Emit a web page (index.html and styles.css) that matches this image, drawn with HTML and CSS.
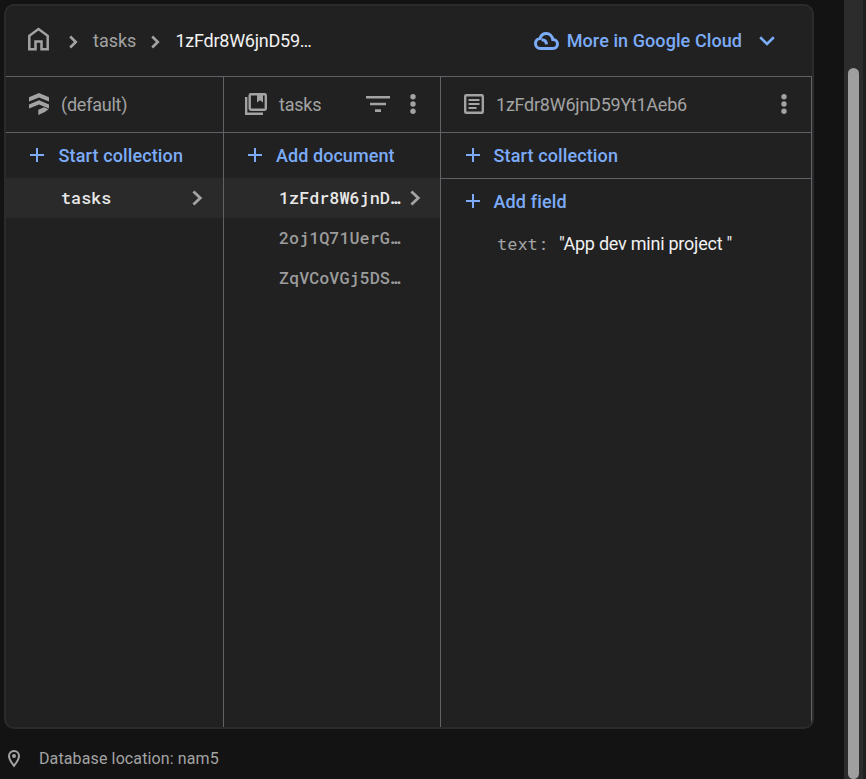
FILE: index.html
```
<!DOCTYPE html>
<html lang="en">
<head>
<meta charset="utf-8">
<title>Firestore data</title>
<link rel="stylesheet" href="styles.css">
</head>
<body>
<div class="page">
<main>
<section class="panel">
  <header class="topbar">
    <svg class="home" width="22" height="24" viewBox="0 0 22 24"><path d="M1.300 22.300V8.800L10.500 2l9.200 6.800v13.500h-6.200v-7.800h-6v7.800z" fill="none" stroke="currentColor" stroke-width="2.500"/></svg>
    <svg class="crumb-arrow first" width="9" height="14" viewBox="0 0 9 14"><path d="M1.200 1.500 6.800 7l-5.600 5.500"/></svg>
    <span class="crumb">tasks</span>
    <svg class="crumb-arrow" width="9" height="14" viewBox="0 0 9 14"><path d="M1.200 1.500 6.800 7l-5.600 5.500"/></svg>
    <span class="crumb current">1zFdr8W6jnD59…</span>
    <a class="cloud-link">
      <svg width="25" height="18" viewBox="0 0 25 18" fill="none" stroke="currentColor" stroke-width="3"><path d="M14 16.400H6.500C3.500 16.400 1.500 14.200 1.500 11.400c0-2.600 1.900-4.700 4.500-5C7 3.200 9.500 1.500 12.300 1.500c3.500 0 6 2.600 6.500 6 2.700.1 4.700 2 4.700 4.500s-1.800 4.400-4.500 4.400H14"/><path d="M7.500 7.800c3.300 0 4.900 1.800 5 4.600"/></svg>
      <span>More in Google Cloud</span>
      <svg class="down" width="16" height="10" viewBox="0 0 16 10"><path d="M1.200 1.300 8 8l6.800-6.700" fill="none" stroke="currentColor" stroke-width="2.600"/></svg>
    </a>
  </header>
  <div class="columns">
    <section class="column">
      <header class="col-head">
        <svg width="20" height="22" viewBox="0 0 20 22" fill="currentColor"><path d="M0 4.200 10 0l10 4.200V8.400L10 4.400 0 8.400z M0 11.400 10 7.200l10 4.200v4.200L10 11.600 0 15.600z M9.300 16.800l5.700-2.500 4.600 2-3.800 2.800-6.500 2.800z"/></svg>
        <span class="title">(default)</span>
      </header>
      <a class="add"><svg width="14" height="14" viewBox="0 0 14 14"><path d="M7 0v14M0 7h14"/></svg><span>Start collection</span></a>
      <div class="item selected"><span>tasks</span><svg class="go" width="11" height="16" viewBox="0 0 11 16"><path d="M1.400 1.400 8.300 8l-6.900 6.600"/></svg></div>
    </section>
    <section class="column">
      <header class="col-head books">
        <svg width="22" height="22" viewBox="0 0 22 22"><path d="M1.200 4v16.800H18M5.900 1.200h13.700q1.200 0 1.200 1.200v13.200q0 1.200-1.200 1.200H5.900q-1.200 0-1.200-1.200V2.400q0-1.200 1.200-1.200z" fill="none" stroke="currentColor" stroke-width="2.400"/><path d="M12 1h6v8.600l-3-2.300-3 2.300z" fill="currentColor"/></svg>
        <span class="title">tasks</span>
        <svg class="filter" width="24" height="16" viewBox="0 0 24 16" fill="currentColor"><path d="M0 0h24v2.500H0zM4 6.700h16v2.600H4zM9 13.300h6V16H9z"/></svg>
        <svg class="more" width="6" height="20" viewBox="0 0 6 20" fill="currentColor"><circle cx="3" cy="2.700" r="2.700"/><circle cx="3" cy="10" r="2.700"/><circle cx="3" cy="17.300" r="2.700"/></svg>
      </header>
      <a class="add wide-gap"><svg width="14" height="14" viewBox="0 0 14 14"><path d="M7 0v14M0 7h14"/></svg><span>Add document</span></a>
      <div class="item selected"><span>1zFdr8W6jnD…</span><svg class="go" width="11" height="16" viewBox="0 0 11 16"><path d="M1.400 1.400 8.300 8l-6.900 6.600"/></svg></div>
      <div class="item"><span>2oj1Q71UerG…</span></div>
      <div class="item"><span>ZqVCoVGj5DS…</span></div>
    </section>
    <section class="column fields">
      <header class="col-head document">
        <svg width="20" height="20" viewBox="0 0 20 20" fill="none" stroke="currentColor" stroke-width="2.200"><rect x="1.200" y="1.200" width="17.600" height="17.600" rx="1" stroke-width="2.400"/><path d="M4.500 6h11M4.500 10h11M4.500 14h8"/></svg>
        <span class="title">1zFdr8W6jnD59Yt1Aeb6</span>
        <svg class="more" width="6" height="20" viewBox="0 0 6 20" fill="currentColor"><circle cx="3" cy="2.700" r="2.700"/><circle cx="3" cy="10" r="2.700"/><circle cx="3" cy="17.300" r="2.700"/></svg>
      </header>
      <a class="add ruled"><svg width="14" height="14" viewBox="0 0 14 14"><path d="M7 0v14M0 7h14"/></svg><span>Start collection</span></a>
      <a class="add"><svg width="14" height="14" viewBox="0 0 14 14"><path d="M7 0v14M0 7h14"/></svg><span>Add field</span></a>
      <div class="field"><span class="key">text:</span><span class="value">"App dev mini project "</span></div>
    </section>
  </div>
</section>
<footer class="location">
  <svg width="12" height="18" viewBox="0 0 12 18"><path d="M6 1C3.200 1 1 3.100 1 5.900 1 9.500 6 15.800 6 15.800s5-6.300 5-9.900C11 3.100 8.800 1 6 1z" fill="none" stroke="currentColor" stroke-width="2"/><circle cx="6" cy="6" r="2" fill="currentColor"/></svg>
  <span>Database location: nam5</span>
</footer>
</main>
<div class="scrollbar"><div class="thumb"></div></div>
</div>
</body>
</html>
```

FILE: styles.css
```
* { box-sizing: border-box; }
body { margin: 0; background: #131313; color: #a3a3a3; font: 18px/24px Roboto, sans-serif; overflow: hidden; }
svg { flex: none; display: block; }
.page { display: flex; height: 779px; }
main { width: 844px; padding: 4px 0 0 4px; }
.panel { width: 810px; height: 725px; border: 2px solid #2b2b2b; border-radius: 10px; background: #212121; overflow: hidden; display: flex; flex-direction: column; }
.topbar { height: 70px; display: flex; align-items: center; padding-left: 22px; }
.home { margin-top: -5px; }
.crumb-arrow { margin: 1px 15px 0 15px; }
.crumb-arrow.first { margin-left: 19px; margin-right: 15px; }
.crumb-arrow path, .go path { fill: none; stroke: currentColor; stroke-width: 2.6; }
.current { color: #f1f1f1; letter-spacing: -0.24px; }
.cloud-link { margin: 0 36px 0 auto; display: flex; align-items: center; color: #7cacf8; font-weight: 500; }
.cloud-link span { margin-left: 8px; letter-spacing: 0.08px; }
.down { margin-left: 17px; margin-right: 1px; }
.columns { flex: 1; display: grid; grid-template-columns: 218px 217px 371px; border-top: 1px solid #5f6368; }
.column { border-right: 1px solid #5f6368; }
.col-head { height: 56px; border-bottom: 1px solid #5f6368; display: flex; align-items: center; padding: 0 24px 1px 23px; }
.title { margin: 2px 0 0 12px; letter-spacing: -0.24px; }
.books { padding: 0 24px 1px 21px; }
.filter { margin-left: auto; }
.books .more { margin-left: 20px; }
.document .more { margin-left: auto; }
.add { height: 45px; display: flex; align-items: center; padding-left: 24px; color: #7cacf8; font-weight: 500; letter-spacing: 0.13px; }
.add span { margin-left: 14.5px; }
.add svg { margin-top: -2px; }
.add path { stroke: currentColor; stroke-width: 2; }
.wide-gap { letter-spacing: 0.06px; }
.wide-gap span { margin-left: 14px; }
.fields .add { padding-left: 24.5px; }
.fields .add span { margin-left: 14px; }
.document { padding-right: 24px; }
.ruled { height: 46px; border-bottom: 1px solid #5f6368; }
.item { height: 40px; display: flex; align-items: center; padding: 0 20px 0 55px; font: 500 16.800px/24px "Roboto Mono", "DejaVu Sans Mono", monospace; white-space: nowrap; }
.item.selected { background: #2a2a2a; color: #e8e8e8; }
.item:not(.selected) { color: #9c9c9c; }
.books ~ .item { padding-right: 19px; }
.go { margin-left: auto; color: #a3a3a3; }
.go path { stroke-width: 2.8; }
.field { height: 40px; display: flex; align-items: center; padding-left: 56px; }
.key { font: 17px/24px "Roboto Mono", "DejaVu Sans Mono", monospace; }
.value { color: #f1f1f1; margin-left: 11px; letter-spacing: -0.24px; }
.location { display: flex; align-items: center; height: 60px; padding-left: 4px; font-size: 16px; letter-spacing: 0.12px; }
.location span { margin-left: 19px; }
.scrollbar { width: 22px; padding: 68px 0 0 4px; background: #2c2c2c; border-right: 3px solid #202020; }
.thumb { width: 11px; height: 711px; border-radius: 6px; background: #9f9f9f; }
```
